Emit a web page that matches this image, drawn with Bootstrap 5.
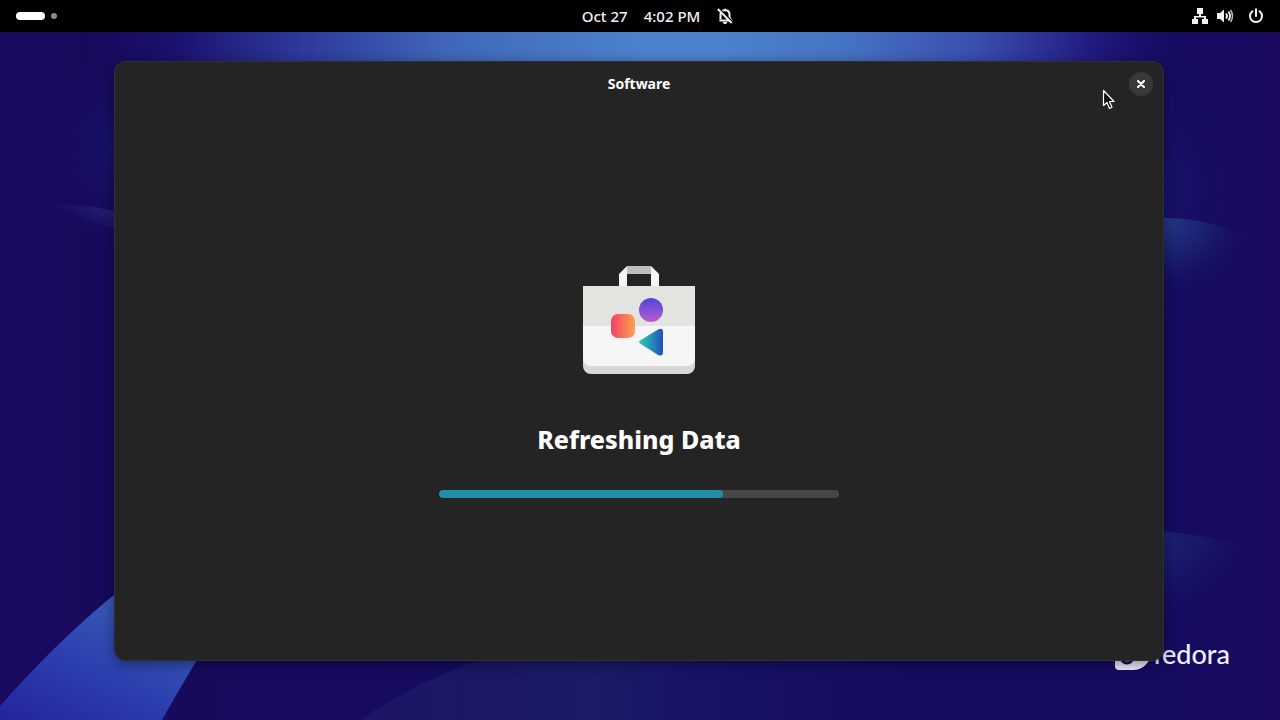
<!DOCTYPE html>
<html lang="en" data-bs-theme="dark">
<head>
<meta charset="utf-8">
<meta name="viewport" content="width=device-width, initial-scale=1">
<title>Software</title>
<link href="https://cdn.jsdelivr.net/npm/bootstrap@5.3.0/dist/css/bootstrap.min.css" rel="stylesheet">
<style>
  body { font-family: "Noto Sans", "Open Sans", sans-serif; background: #180a5e; color: #fff; }
  .topbar { height: 32px; background: #000; }
  .topbar .btn { --bs-btn-color: #f2f2f2; --bs-btn-hover-color: #fff; --bs-btn-font-size: 15px; --bs-btn-line-height: 20px; --bs-btn-font-weight: 500; }
  .side { flex: 1 1 0; }
  .pill { width: 29px; height: 8px; background: #fff; }
  .dot { width: 6px; height: 6px; background: #8a8a8a; margin-left: 6px; }
  .clock { margin-left: 36px; }
  .desktop { padding: 29px 116px 59px 114px; }
  .wallpaper { inset: 0; z-index: 0; }
  .brand { right: 50px; bottom: 50px; z-index: 0; gap: 2px; color: #f0efff; }
  .brand-name { font-family: Lato, sans-serif; font-size: 27px; line-height: 32px; font-weight: 500; }
  .app-window { z-index: 1; background: #242424; border-radius: 12px; border: 1px solid #303030; box-shadow: 0 3px 14px rgba(0,0,20,.45); }
  .titlebar { height: 44px; font-size: 14px; line-height: 20px; padding: 0 10px; }
  .close-btn { width: 24px; height: 24px; background: #383838; color: #fff; }
  .close-btn:hover { background: #464646; }
  .status { padding-bottom: 3px; }
  .status-title { font-size: 25px; line-height: 36px; font-weight: 800; margin: 47px 0 33px; }
  .progress { --bs-progress-height: 8px; --bs-progress-bg: #464646; --bs-progress-bar-bg: #2190a4; width: 400px; max-width: 90%; border-radius: 4px; }
  .progress-bar { border-radius: 4px; }
  .pointer { right: 164px; top: 57px; z-index: 2; pointer-events: none; }
</style>
</head>
<body class="vh-100 d-flex flex-column overflow-hidden">
<header class="topbar d-flex align-items-center flex-shrink-0">
  <div class="side">
    <button class="btn border-0 p-0 ms-3 d-flex align-items-center" aria-label="Activities">
      <span class="pill rounded-pill"></span><span class="dot rounded-circle"></span>
    </button>
  </div>
  <button class="clock btn border-0 p-0 d-flex align-items-center gap-3" aria-label="Calendar and notifications">
    <span>Oct 27</span><span>4:02 PM</span>
    <svg width="18" height="18" viewBox="0 0 16 16" fill="none" stroke="#f2f2f2" aria-hidden="true">
      <path d="M4 10.800V6.500C4 4 5.500 2.800 8 2.800s4 1.200 4 3.700v2.700L13.500 12H3M8 1.500v1.300" stroke-width="1.800"/>
      <path d="M6 13.300h4a1.700 1.500 0 0 1-4 0z" fill="#f2f2f2" stroke="none"/>
      <path d="M2.300 1.300l12.400 12.400" stroke="#000" stroke-width="2"/>
      <path d="M1.600 1.800l12.400 12.400" stroke-width="1.700"/>
    </svg>
  </button>
  <div class="side d-flex justify-content-end">
    <button class="btn border-0 p-0 d-flex align-items-center me-3" aria-label="System menu">
      <svg width="16" height="16" viewBox="0 0 16 16" fill="#f2f2f2" aria-hidden="true">
        <path d="M5 0h6v6H9v2h5v3h2v5h-6v-5h2V9.500H4V11h2v5H0v-5h2V8h5V6H5z"/>
      </svg>
      <svg class="ms-2 me-2" width="24" height="16" viewBox="-1 0 24 16" fill="none" stroke="#f2f2f2" aria-hidden="true">
        <path d="M0 5h3l4-3.500v13L3 11H0z" fill="#f2f2f2" stroke="none"/>
        <path d="M9 5.500q2.200 2.500 0 5" stroke-width="1.800"/>
        <path d="M11.300 3.500q3.500 4.500 0 9" stroke-width="1.800"/>
        <path d="M13.500 2q4 6 0 12" stroke-width="1.500" stroke="#bbb"/>
      </svg>
      <svg width="16" height="16" viewBox="0 0 16 16" fill="none" stroke="#f2f2f2" stroke-width="2" stroke-linecap="round" aria-hidden="true">
        <path d="M4.500 3.200a6 6 0 1 0 7 0M8 1.300V8"/>
      </svg>
    </button>
  </div>
</header>

<main class="desktop flex-grow-1 position-relative d-flex">
  <svg class="wallpaper position-absolute w-100 h-100" viewBox="0 32 1280 688" preserveAspectRatio="none" aria-hidden="true">
    <defs>
      <linearGradient id="base" x1="0" x2="1">
        <stop offset="0" stop-color="#190a60"/><stop offset=".08" stop-color="#170a5c"/>
        <stop offset=".5" stop-color="#150c64"/><stop offset=".93" stop-color="#150b60"/><stop offset="1" stop-color="#1b0a60"/>
      </linearGradient>
      <linearGradient id="sky" x1="0" x2="1">
        <stop offset="0" stop-color="#170d62" stop-opacity="0"/><stop offset=".09" stop-color="#1b1470"/>
        <stop offset=".2" stop-color="#2f3a9c"/><stop offset=".33" stop-color="#4068ba"/>
        <stop offset=".5" stop-color="#4c82cc"/><stop offset=".57" stop-color="#4c82cc"/><stop offset=".68" stop-color="#4674c4"/>
        <stop offset=".8" stop-color="#3a4eae"/><stop offset=".9" stop-color="#221c82"/>
        <stop offset="1" stop-color="#170c62" stop-opacity="0"/>
      </linearGradient>
      <linearGradient id="beam" x1="0" y1="1" x2=".8" y2="0">
        <stop offset="0" stop-color="#25249a"/><stop offset=".45" stop-color="#2c40b0"/><stop offset="1" stop-color="#3d66b8"/>
      </linearGradient>
      <radialGradient id="glow"><stop offset="0" stop-color="#17136a"/><stop offset="1" stop-color="#160b60" stop-opacity="0"/></radialGradient>
      <radialGradient id="cloud" cx="0" cy="0" r="1">
        <stop offset="0" stop-color="#25408c"/><stop offset=".5" stop-color="#1b2474" stop-opacity=".8"/><stop offset="1" stop-color="#160b60" stop-opacity="0"/>
      </radialGradient>
      <linearGradient id="wisp" x1="1" y1="0" x2="0" y2=".6">
        <stop offset="0" stop-color="#2c2c80"/><stop offset="1" stop-color="#180a60" stop-opacity="0"/>
      </linearGradient>
      <linearGradient id="hillfade" x1="0" x2="1">
        <stop offset="0" stop-color="#1c1465"/><stop offset=".4" stop-color="#1a1b69"/><stop offset="1" stop-color="#160d60" stop-opacity="0"/>
      </linearGradient>
    </defs>
    <path d="M0 32H1280V720H0z" fill="url(#base)"/>
    <path d="M80 32H1200V90H80z" fill="url(#sky)"/>
    <ellipse cx="115" cy="150" rx="80" ry="110" fill="url(#glow)"/>
    <ellipse cx="1165" cy="190" rx="95" ry="150" fill="url(#glow)"/>
    <path d="M50 206Q85 201 125 215V232Q90 222 50 206z" fill="url(#wisp)"/>
    <path d="M1155 218Q1210 216 1262 244V300H1155z" fill="url(#cloud)"/>
    <path d="M1155 530Q1205 536 1262 546V630H1155z" fill="url(#cloud)" opacity=".5"/>
    <path d="M0 706Q60 638 120 590L222 620Q190 670 162 720H0z" fill="url(#beam)"/>
    <path d="M360 720Q415 682 485 658H950V720z" fill="url(#hillfade)"/>
  </svg>

  <div class="brand position-absolute d-flex align-items-end">
    <svg width="36" height="36" viewBox="0 0 36 36" aria-hidden="true">
      <path d="M18 0a18 18 0 0 1 0 36H4a4 4 0 0 1-4-4V18A18 18 0 0 1 18 0z" fill="#f0efff"/>
      <path d="M12 17a6 6 0 1 0 6 6V13a5 5 0 0 1 6-5M12 18h10" fill="none" stroke="#180b60" stroke-width="3"/>
    </svg>
    <span class="brand-name">fedora</span>
  </div>

  <section class="app-window position-relative flex-grow-1 d-flex flex-column" aria-label="Software">
    <div class="titlebar d-flex align-items-center flex-shrink-0">
      <div class="side"></div>
      <div class="fw-bold">Software</div>
      <div class="side d-flex justify-content-end">
        <button class="close-btn btn border-0 p-0 rounded-circle d-flex align-items-center justify-content-center" aria-label="Close">
          <svg width="8" height="8" viewBox="0 0 8 8" stroke="#fff" stroke-width="2" stroke-linecap="round" aria-hidden="true"><path d="M1 1l6 6M7 1L1 7"/></svg>
        </button>
      </div>
    </div>
    <div class="status flex-grow-1 d-flex flex-column align-items-center justify-content-center">
      <svg width="112" height="108" viewBox="0 0 112 108" aria-hidden="true">
        <defs>
          <linearGradient id="red" x1="0" x2="1"><stop offset="0" stop-color="#ee4269"/><stop offset="1" stop-color="#ffa050"/></linearGradient>
          <linearGradient id="violet" x1="0" y1="0" x2="0" y2="1"><stop offset="0" stop-color="#4e45da"/><stop offset="1" stop-color="#bd5bd0"/></linearGradient>
          <linearGradient id="teal" x1="0" x2="1"><stop offset="0" stop-color="#30d0b0"/><stop offset="1" stop-color="#2050bd"/></linearGradient>
        </defs>
        <path d="M44 0H68V8H44z" fill="#c0bfbc"/>
        <path d="M36 20V8L44 0V20z M76 20V8L68 0V20z" fill="#f6f5f4"/>
        <path d="M0 20H112V100a8 8 0 0 1-8 8H8a8 8 0 0 1-8-8z" fill="#d8d8d6"/>
        <path d="M0 20H112V92a8 8 0 0 1-8 8H8a8 8 0 0 1-8-8z" fill="#f6f6f6"/>
        <path d="M0 20H112V60H0z" fill="#e2e4df"/>
        <rect x="28" y="48" width="24" height="24" rx="7" fill="url(#red)"/>
        <circle cx="68" cy="44" r="12" fill="url(#violet)"/>
        <path d="M57 74.500L75 63.500Q80 61 80 66V86Q80 91 75 89L57 77.500Q55 76 57 74.500z" fill="url(#teal)"/>
      </svg>
      <h1 class="status-title">Refreshing Data</h1>
      <div class="progress" role="progressbar" aria-label="Refreshing data" aria-valuenow="71" aria-valuemin="0" aria-valuemax="100">
        <div class="progress-bar" style="width: 71%"></div>
      </div>
    </div>
  </section>

  <svg class="pointer position-absolute" width="14" height="22" viewBox="0 0 14 22" aria-hidden="true">
    <path d="M1.500 1.500V16.500L5 13.500L7.500 19.500L10 18.300L7.500 12.500H12z" fill="#111" stroke="#fff" stroke-width="1.200" stroke-linejoin="round"/>
  </svg>
</main>
<script src="https://cdn.jsdelivr.net/npm/bootstrap@5.3.0/dist/js/bootstrap.bundle.min.js"></script>
</body>
</html>
